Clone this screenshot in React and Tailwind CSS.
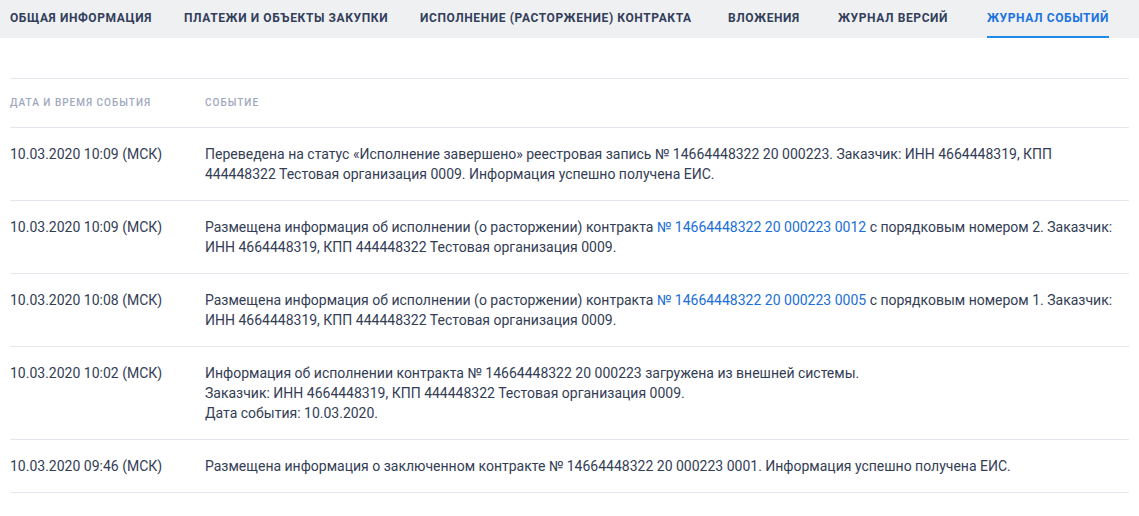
import React from 'react';

const tabs = [
  { label: 'Общая информация', w: 'w-[174px]' },
  { label: 'Платежи и объекты закупки', w: 'w-[236px]' },
  { label: 'Исполнение (расторжение) контракта', w: 'w-[308px]' },
  { label: 'Вложения', w: 'w-[110px]' },
  { label: 'Журнал версий', w: 'w-[149px]' },
  { label: 'Журнал событий', w: '', active: true },
];

const Link = ({ children }) => (
  <a href="#" className="text-[#1a6fd8]">
    {children}
  </a>
);

const events = [
  {
    date: '10.03.2020 10:09 (МСК)',
    text: (
      <>
        Переведена на статус «Исполнение завершено» реестровая запись № 14664448322 20 000223. Заказчик: ИНН 4664448319, КПП
        444448322 Тестовая организация 0009. Информация успешно получена ЕИС.
      </>
    ),
  },
  {
    date: '10.03.2020 10:09 (МСК)',
    text: (
      <>
        Размещена информация об исполнении (о расторжении) контракта <Link>№ 14664448322 20 000223 0012</Link> с порядковым номером 2. Заказчик:
        ИНН 4664448319, КПП 444448322 Тестовая организация 0009.
      </>
    ),
  },
  {
    date: '10.03.2020 10:08 (МСК)',
    text: (
      <>
        Размещена информация об исполнении (о расторжении) контракта <Link>№ 14664448322 20 000223 0005</Link> с порядковым номером 1. Заказчик:
        ИНН 4664448319, КПП 444448322 Тестовая организация 0009.
      </>
    ),
  },
  {
    date: '10.03.2020 10:02 (МСК)',
    text: (
      <>
        Информация об исполнении контракта № 14664448322 20 000223 загружена из внешней системы.
        <br />
        Заказчик: ИНН 4664448319, КПП 444448322 Тестовая организация 0009.
        <br />
        Дата события: 10.03.2020.
      </>
    ),
  },
  {
    date: '10.03.2020 09:46 (МСК)',
    text: <>Размещена информация о заключенном контракте № 14664448322 20 000223 0001. Информация успешно получена ЕИС.</>,
  },
];

export default function App() {
  return (
    <div className="min-h-screen bg-white font-['Roboto',sans-serif] text-[#333d55]">
      <nav className="flex h-[38px] bg-[#eff0f2] px-[10px]">
        {tabs.map((tab) => (
          <div key={tab.label} className={`flex shrink-0 ${tab.w}`}>
            <div
              className={`flex items-center whitespace-nowrap border-b-2 text-[12px] font-bold uppercase tracking-[0.6px] ${
                tab.active ? 'border-[#2089e5] text-[#1a73e0]' : 'border-transparent text-[#323e5a]'
              }`}
            >
              {tab.label}
            </div>
          </div>
        ))}
      </nav>

      <div className="px-[10px] pt-10">
        <table className="w-full border-collapse text-left">
          <thead>
            <tr className="border-y border-[#e4e6ef]">
              <th className="w-[195px] py-[18px] text-[10px] font-medium uppercase leading-3 tracking-[1px] text-[#a0a8bd]">
                Дата и время события
              </th>
              <th className="py-[18px] text-[10px] font-medium uppercase leading-3 tracking-[1px] text-[#a0a8bd]">
                Событие
              </th>
            </tr>
          </thead>
          <tbody>
            {events.map((ev, idx) => (
              <tr key={idx} className="border-b border-[#e4e6ef] align-top">
                <td className="py-4 text-[14px] leading-5">{ev.date}</td>
                <td className="py-4 pr-4 text-[14px] leading-5">{ev.text}</td>
              </tr>
            ))}
          </tbody>
        </table>
      </div>
    </div>
  );
}
